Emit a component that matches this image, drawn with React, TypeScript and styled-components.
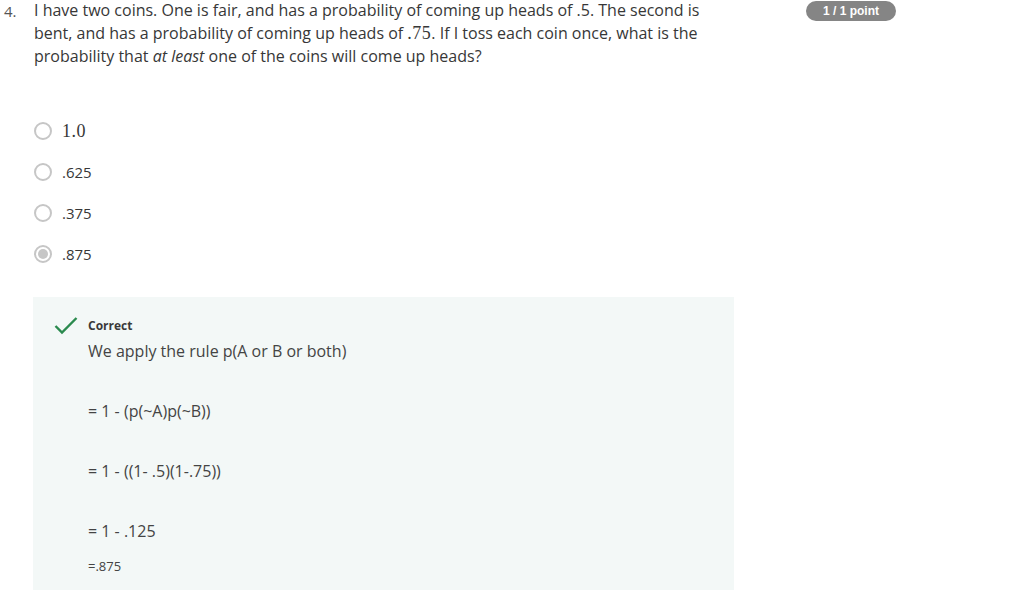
import React from "react";
import styled, { createGlobalStyle } from "styled-components";

const Global = createGlobalStyle`
  html, body { margin: 0; padding: 0; background: #fff; }
  body { font-family: "Open Sans", "Noto Sans", sans-serif; color: #333; }
`;

const Page = styled.div`
  display: flex;
  align-items: flex-start;
  width: 1027px;
`;

const Number = styled.div`
  width: 34px;
  flex: none;
  padding-left: 4px;
  box-sizing: border-box;
  font-size: 15px;
  line-height: 22px;
  color: #555;
`;

const Main = styled.div`
  width: 701px;
  flex: none;
  margin-left: -1px;
`;

const Question = styled.div`
  font-size: 16px;
  line-height: 23px;
  margin-top: -1px;
  padding-left: 1px;
  padding-right: 4px;
  color: #373737;
`;

const MathText = styled.span`
  font-family: "Liberation Serif", "Times New Roman", serif;
  font-size: 18px;
  line-height: 1;
  letter-spacing: 0.5px;
`;

const Options = styled.div`
  display: flex;
  flex-direction: column;
  gap: 23px;
  margin-top: 54px;
  padding-left: 1px;
`;

const Option = styled.label`
  display: flex;
  align-items: center;
  gap: 10px;
  height: 18px;
  font-size: 15px;
  color: #373737;
`;

const Radio = styled.span<{ $checked?: boolean }>`
  width: 18px;
  height: 18px;
  box-sizing: border-box;
  border-radius: 50%;
  border: 2px solid #c6c6c6;
  display: flex;
  align-items: center;
  justify-content: center;
  &::after {
    content: "";
    width: 10px;
    height: 10px;
    border-radius: 50%;
    background: ${(p) => (p.$checked ? "#c6c6c6" : "transparent")};
  }
`;

const Feedback = styled.div`
  margin-top: 34px;
  background: #f3f8f7;
  padding: 21px 20px 15px 21px;
  display: flex;
  gap: 10px;
  height: 293px;
  box-sizing: border-box;
`;

const CheckWrap = styled.div`
  width: 24px;
  margin-top: -2px;
`;

const FeedbackBody = styled.div`
  display: flex;
  flex-direction: column;
`;

const Status = styled.div`
  font-size: 12px;
  font-weight: 700;
  line-height: 16px;
  color: #3a3a3a;
`;

const Para = styled.p<{ $small?: boolean; $gap?: number }>`
  margin: ${(p) => p.$gap ?? 0}px 0 0 0;
  font-size: ${(p) => (p.$small ? 13 : 16)}px;
  line-height: 24px;
  color: #444;
`;

const Badge = styled.div`
  margin-left: 72px;
  margin-top: 1px;
  height: 20px;
  padding: 0 17px;
  border-radius: 10px;
  background: #858585;
  color: #fff;
  font-family: "Liberation Sans", Arial, sans-serif;
  font-size: 12px;
  font-weight: 700;
  line-height: 20px;
  white-space: nowrap;
`;

const Check = () => (
  <svg width="24" height="19" viewBox="0 0 24 19" fill="none">
    <path d="M1.5 10 L8 16.5 L22.5 2" stroke="#2a8a4e" strokeWidth="2.4" />
  </svg>
);

export default function App() {
  return (
    <>
      <Global />
      <Page>
        <Number>4.</Number>
        <Main>
          <Question>
            I have two coins. One is fair, and has a probability of coming up heads of .5. The second is
            bent, and has a probability of coming up heads of <MathText>.75</MathText>. If I toss each coin once, what is the
            probability that <em>at least</em> one of the coins will come up heads?
          </Question>
          <Options>
            <Option>
              <Radio />
              <MathText>1.0</MathText>
            </Option>
            <Option>
              <Radio />
              .625
            </Option>
            <Option>
              <Radio />
              .375
            </Option>
            <Option>
              <Radio $checked />
              .875
            </Option>
          </Options>
          <Feedback>
            <CheckWrap>
              <Check />
            </CheckWrap>
            <FeedbackBody>
              <Status>Correct</Status>
              <Para $gap={5}>We apply the rule p(A or B or both)</Para>
              <Para $gap={36}>= 1 - (p(~A)p(~B))</Para>
              <Para $gap={36}>= 1 - ((1- .5)(1-.75))</Para>
              <Para $gap={36}>= 1 - .125</Para>
              <Para $gap={11} $small>=.875</Para>
            </FeedbackBody>
          </Feedback>
        </Main>
        <Badge>1 / 1 point</Badge>
      </Page>
    </>
  );
}
